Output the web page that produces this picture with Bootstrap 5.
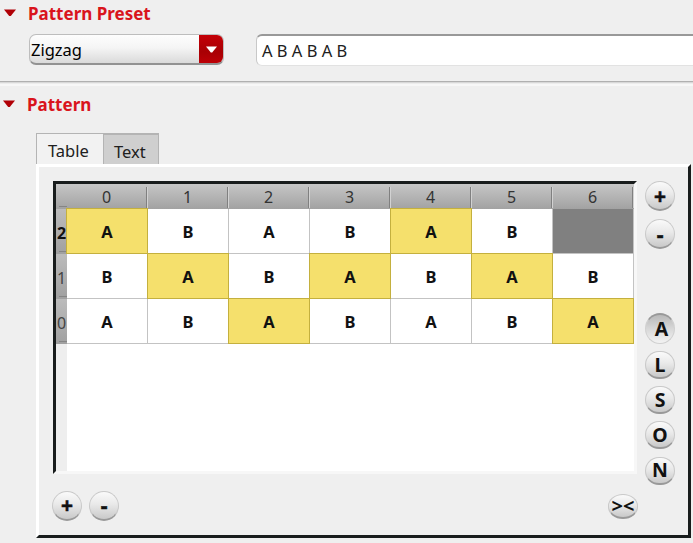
<!DOCTYPE html>
<html lang="en">
<head>
<meta charset="utf-8">
<title>Pattern</title>
<link href="https://cdn.jsdelivr.net/npm/bootstrap@5.3.0/dist/css/bootstrap.min.css" rel="stylesheet">
<style>
body{width:693px;height:543px;background:#efefef;color:#202020;font-family:"Noto Sans","Open Sans",sans-serif;font-size:16px;line-height:20px}
.sect-title{color:#d9141c;font-weight:700;font-size:17px;height:20px}
.sect-title span{padding-top:1px}
.sect-preset{height:81px;padding-top:3px}
.sect-preset .sect-title{padding-left:4px;gap:12px}
.sect-pattern .sect-title{padding-left:3px;gap:12px}
.preset-row{margin:11px 0 0 29px;gap:32px}
.combo{width:195px;height:31px;border:1px solid #bdbdbd;border-bottom:2px solid #929292;border-radius:7px;background:linear-gradient(#fdfdfd,#f5f5f5 45%,#dadada);font-size:16.5px;text-align:left}
.combo-label{padding:2px 0 0 1px}
.combo-arrow{width:24px;background:linear-gradient(#c40007,#a80004 60%,#bd0006);border-radius:0 6px 6px 0}
.line-edit{height:32px;border:1px solid #e2e2e2;border-top:2px solid #999;border-left-color:#c8c8c8;border-right:0;border-radius:6px 0 0 6px;background:#fff;padding-left:5px;font-size:16.5px}
.rule{height:5px;border-top:1px solid #b0b0b0;background:linear-gradient(#d8d8d8 0 1px,#ececec 1px 2px,#f7f7f7 2px)}
.sect-pattern{padding-top:8px}
.tabs{margin:19px 0 0 36px;height:31px}
.tab-item{border:1px solid #b4b4b4;border-bottom:0;font-size:16.5px;line-height:20px}
.tab-on{width:67px;border-right:0;padding:7px 0 0 11px;background:#f2f2f2}
.tab-off{width:56px;padding:7px 0 0 10px;background:#cfcfcf;border-width:2px 1px 0 1px}
.panel{margin-left:36px;width:655px;height:374px;border:3px solid #fff;border-right-color:#181c1c;border-bottom-color:#181c1c;padding:14px 0 0 14px}
.view{width:584px;height:293px;border:3px solid #f7f7f7;border-top-color:#181c1c;border-left-color:#181c1c;background:linear-gradient(90deg,#eee 11px,#fff 11px)}
.main-row{gap:8px}
.cells{grid-template-columns:11px repeat(7,81px);grid-template-rows:25px repeat(3,45px);width:578px}
.hc{background:linear-gradient(#c6c6c6,#a2a2a2);color:#333;font-size:16px;position:relative;padding:1px 2px 0 0}
.hc:not(.corner)::after{content:"";position:absolute;right:0;top:3px;bottom:1px;width:2px;background:linear-gradient(90deg,#808080 50%,#d2d2d2 50%)}
.rh{background:linear-gradient(#bcbcbc,#a0a0a0);font-size:16px;overflow:hidden;color:#444;position:relative;padding-top:2px}
.rh::after,.corner::after{content:"";position:absolute;left:3px;right:0;bottom:2px;height:1px;background:#858585}
.rh-bold{font-weight:700;color:#111}
.pc{background:#fff;border:0 solid #c3c3c3;border-width:0 1px 1px 0;font-weight:700;font-size:16.5px;color:#111;padding-top:1px}
.pc-on{background:#f5e06c;border-color:#c4b03e;box-shadow:-1px 0 #c4b03e,0 -1px #c4b03e,-1px -1px #c4b03e;z-index:1;position:relative}
.pc-off{background:#808080}
.rbtn{width:30px;height:30px;border:1px solid #c9c9c9;border-bottom:2px solid #999;border-radius:50%;background:linear-gradient(#fafafa,#e9e9e9 45%,#c9c9c9);font-weight:700;font-size:19px;line-height:20px;color:#111}
.rbtn-sign{font-size:21px;-webkit-text-stroke:.5px #111}
.rbtn-s{height:28px;font-size:19.5px;margin-bottom:7.2px;border-radius:14px}
.rbtn-down{background:linear-gradient(#b8b8b8,#d8d8d8 50%,#f3f3f3);border:1px solid #d0d0d0;border-top:2px solid #999;height:31px;margin:64px 0 7px;padding:0 0 0 3px;font-size:19.5px;border-radius:50%}
.rbtn-w{height:25px;border-radius:15px/12px;font-size:20px;margin-top:3px}
.foot-row{margin:6px 0 0 -1px;width:586px;gap:7px}
</style>
<script src="https://cdn.jsdelivr.net/npm/bootstrap@5.3.0/dist/js/bootstrap.bundle.min.js"></script>
</head>
<body class="overflow-hidden m-0">
<section class="sect-preset">
  <div class="sect-title d-flex align-items-center"><svg width="12" height="8"><path d="M0 .5H12L6.8 7H5.2Z" fill="#b00006"/></svg><span>Pattern Preset</span></div>
  <div class="preset-row d-flex">
    <button class="combo d-flex p-0 flex-shrink-0" type="button">
      <span class="flex-grow-1 align-self-center combo-label">Zigzag</span>
      <span class="combo-arrow align-self-stretch d-flex align-items-center justify-content-center"><svg width="11" height="7"><path d="M0 .5H11L6.2 6.5H4.8Z" fill="#fff"/></svg></span>
    </button>
    <div class="line-edit flex-grow-1 d-flex align-items-center"><span>A B A B A B</span></div>
  </div>
</section>
<div class="rule"></div>
<section class="sect-pattern">
  <div class="sect-title d-flex align-items-center"><svg width="12" height="8"><path d="M0 .5H12L6.8 7H5.2Z" fill="#b00006"/></svg><span>Pattern</span></div>
  <div class="tabs d-flex">
    <div class="tab-item tab-on">Table</div><div class="tab-item tab-off">Text</div>
  </div>
  <div class="panel">
    <div class="main-row d-flex">
      <div class="view flex-shrink-0">
        <div class="cells d-grid" id="cells"></div>
      </div>
      <div class="d-flex flex-column">
        <button class="rbtn rbtn-sign d-flex align-items-center justify-content-center p-0" type="button">+</button>
        <button class="rbtn rbtn-sign d-flex align-items-center justify-content-center p-0 mt-2" type="button">-</button>
        <button class="rbtn rbtn-down d-flex align-items-center justify-content-center" type="button">A</button>
        <button class="rbtn rbtn-s d-flex align-items-center justify-content-center p-0" type="button">L</button>
        <button class="rbtn rbtn-s d-flex align-items-center justify-content-center p-0" type="button">S</button>
        <button class="rbtn rbtn-s d-flex align-items-center justify-content-center p-0" type="button">O</button>
        <button class="rbtn rbtn-s d-flex align-items-center justify-content-center p-0 mb-0" type="button">N</button>
      </div>
    </div>
    <div class="foot-row d-flex">
      <button class="rbtn rbtn-sign d-flex align-items-center justify-content-center p-0" type="button">+</button>
      <button class="rbtn rbtn-sign d-flex align-items-center justify-content-center p-0" type="button">-</button>
      <button class="rbtn rbtn-w d-flex align-items-center justify-content-center p-0 ms-auto" type="button">&gt;&lt;</button>
    </div>
  </div>
</section>
<script>
const mid = ' d-flex align-items-center justify-content-center';
let out = '<div class="hc corner"></div>';
for (let i = 0; i < 7; i++) out += `<div class="hc${mid}">${i}</div>`;
// lowercase marks a highlighted cell, "-" an empty one
[['2', 'aBABaB-'], ['1', 'BaBaBaB'], ['0', 'ABaBABa']].forEach(([label, row]) => {
  out += `<div class="rh${label === '2' ? ' rh-bold' : ''}${mid}">${label}</div>`;
  for (const c of row) {
    const kind = c === '-' ? ' pc-off' : c === 'a' ? ' pc-on' : '';
    out += `<div class="pc${kind}${mid}">${c === '-' ? '' : c.toUpperCase()}</div>`;
  }
});
document.getElementById('cells').innerHTML = out;
</script>
</body>
</html>
